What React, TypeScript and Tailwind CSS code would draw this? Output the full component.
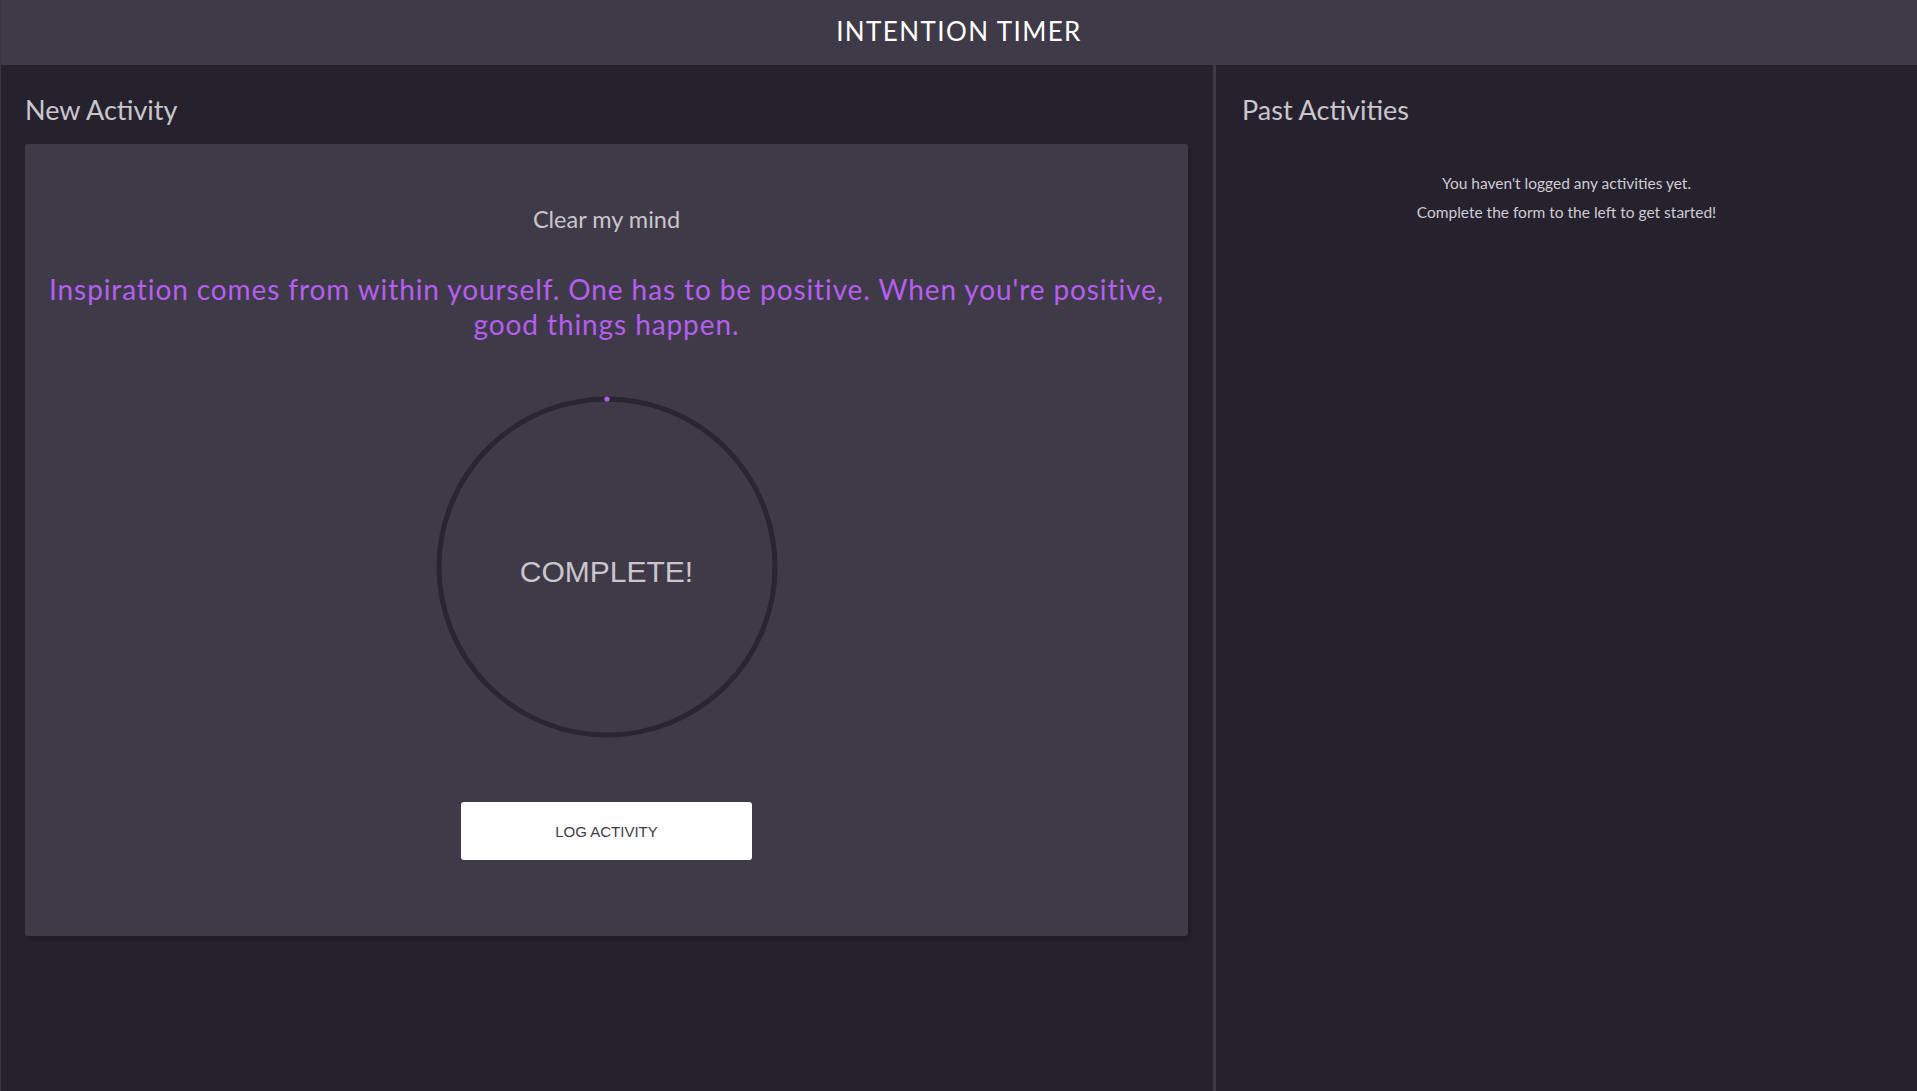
import React from "react";

export default function App() {
  return (
    <div className="w-[1917px] h-[1091px] bg-[#25222d] flex flex-col overflow-hidden font-[Lato,'Liberation_Sans',sans-serif] border-l border-[#3a3542]">
      <header className="h-[65px] shrink-0 bg-[#3f3a47] flex items-center justify-center">
        <h1 className="text-white text-[26px] tracking-[1.4px] leading-none pb-[3px]">INTENTION TIMER</h1>
      </header>
      <main className="flex flex-1 min-h-0">
        <section className="w-[1215px] shrink-0 border-r-[3px] border-[#3f3a47] pl-[24px] pr-[25px]">
          <h2 className="text-[#c9c6cd] text-[27px] leading-[34px] pt-[28px] pb-[17px]">New Activity</h2>
          <div className="h-[792px] bg-[#3f3a47] rounded-[3px] shadow-[3px_5px_3px_#211e28] flex flex-col items-center pt-[61px] px-[10px]">
            <p className="text-[#c9c6cd] text-[23.5px] leading-[28px]">Clear my mind</p>
            <p className="mt-[39px] text-[#b65ef2] text-[28px] tracking-[0.9px] leading-[35px] text-center">
              Inspiration comes from within yourself. One has to be positive. When you're positive,
              <br />
              good things happen.
            </p>
            <div className="relative mt-[54px] w-[342px] h-[342px] flex items-center justify-center">
              <svg className="absolute inset-0" width="342" height="342" viewBox="0 0 342 342">
                <circle cx="171" cy="171" r="168" fill="none" stroke="#2a2532" strokeWidth="5" />
                <circle cx="171" cy="3" r="2.6" fill="#b65ef2" />
              </svg>
              <span className="relative font-['Liberation_Sans',Arial,sans-serif] text-[30px] text-[#c9c6cd] leading-none pt-[10px]">COMPLETE!</span>
            </div>
            <button className="mt-[64px] w-[291px] h-[58px] bg-white rounded-[3px] font-['Liberation_Sans',Arial,sans-serif] text-[15px] text-[#3f3a47] pt-[2px]">
              LOG ACTIVITY
            </button>
          </div>
        </section>
        <section className="flex-1 px-[26px]">
          <h2 className="text-[#c9c6cd] text-[27px] leading-[34px] pt-[28px]">Past Activities</h2>
          <div className="mt-[42px] flex flex-col items-center text-[#cfccd3] text-[15.5px] leading-[29px]">
            <p>You haven't logged any activities yet.</p>
            <p>Complete the form to the left to get started!</p>
          </div>
        </section>
      </main>
    </div>
  );
}
